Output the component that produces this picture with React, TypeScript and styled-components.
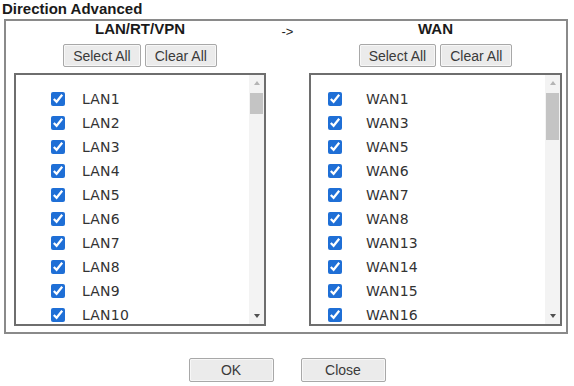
import styled, { createGlobalStyle } from "styled-components";

const GlobalStyle = createGlobalStyle`
  html, body {
    margin: 0;
    padding: 0;
    background: #fff;
  }
  body {
    font-family: "Liberation Sans", Arial, sans-serif;
    color: #222;
  }
`;

/* Page */
const Page = styled.div`
  width: 574px;
  height: 386px;
  padding: 0 6px 0 4px;
  box-sizing: border-box;
  overflow: hidden;
`;

const Title = styled.div`
  font-weight: 700;
  font-size: 15px;
  line-height: 17px;
  height: 19px;
  margin-left: -2px;
  color: #1a1a1a;
`;

const Panel = styled.div`
  display: grid;
  grid-template-columns: 252px 43px 253px;
  padding: 0 4px 6px 8px;
  border: 2px solid #8a8a8a;
  background: #fff;
`;

const Column = styled.div`
  display: flex;
  flex-direction: column;
  align-items: center;
`;

const ColumnTitle = styled.div`
  font-weight: 700;
  font-size: 15px;
  line-height: 16px;
  height: 16px;
  color: #1a1a1a;
`;

const Arrow = styled.div`
  margin-top: 3px;
  font-size: 13px;
  line-height: 16px;
  text-align: center;
  color: #222;
`;

const ButtonRow = styled.div`
  display: flex;
  gap: 4px;
  margin-top: 7px;
`;

type BtnProps = { $width?: number };

const Button = styled.button<BtnProps>`
  height: ${({ $width }) => ($width ? "24px" : "23px")};
  width: ${({ $width }) => ($width ? `${$width}px` : "auto")};
  padding: 0 9px;
  font-family: "Liberation Sans", Arial, sans-serif;
  font-size: 14px;
  color: #3a3a3a;
  background: #ebebeb;
  border: 1px solid #a8a8a8;
  border-radius: 2px;
  box-shadow: inset 0 0 0 1px #f7f7f7;
  cursor: pointer;
`;

const ListBox = styled.div`
  display: flex;
  width: 100%;
  height: 253px;
  margin-top: 6px;
  box-sizing: border-box;
  border: 2px solid #6e6e6e;
  background: #fff;
`;

const Items = styled.div`
  flex: 1;
  overflow: hidden;
  padding-top: 12px;
`;

type RowProps = { $indent: number };

const Row = styled.label<RowProps>`
  display: flex;
  align-items: center;
  height: 24px;
  padding-left: ${({ $indent }) => $indent}px;
`;

const Check = styled.input.attrs({ type: "checkbox" })`
  width: 14px;
  height: 14px;
  margin: 0;
  accent-color: #1f6fd6;
`;

type LabelProps = { $gap: number };

const ItemLabel = styled.span<LabelProps>`
  margin-left: ${({ $gap }) => $gap}px;
  font-family: "DejaVu Sans", Verdana, sans-serif;
  font-size: 14px;
  color: #333;
  letter-spacing: 0.2px;
`;

/* Fake classic scrollbar */
const Scrollbar = styled.div`
  display: flex;
  flex-direction: column;
  width: 15px;
  background: #f3f3f3;
`;

const ScrollButton = styled.div`
  display: flex;
  align-items: center;
  justify-content: center;
  height: 16px;
`;

type TriProps = { $up?: boolean };

const Triangle = styled.div<TriProps>`
  width: 0;
  height: 0;
  border-left: 3.5px solid transparent;
  border-right: 3.5px solid transparent;
  ${({ $up }) =>
    $up
      ? "border-bottom: 4px solid #b4b4b4;"
      : "border-top: 4px solid #505050;"}
`;

const Track = styled.div`
  flex: 1;
  padding: 2px 1px;
`;

const Thumb = styled.div`
  background: #c4c4c4;
`;

const Footer = styled.div`
  display: flex;
  justify-content: center;
  gap: 27px;
  margin-top: 24px;
  margin-left: -4px;
  margin-right: -6px;
`;

const lanItems = Array.from({ length: 10 }, (_, i) => `LAN${i + 1}`);
const wanItems = [1, 3, 5, 6, 7, 8, 13, 14, 15, 16].map((n) => `WAN${n}`);

type ListProps = {
  items: string[];
  indent: number;
  gap: number;
  thumb: number;
};

const CheckList = ({ items, indent, gap, thumb }: ListProps) => (
  <ListBox>
    <Items>
      {items.map((item) => (
        <Row key={item} $indent={indent}>
          <Check defaultChecked />
          <ItemLabel $gap={gap}>{item}</ItemLabel>
        </Row>
      ))}
    </Items>
    <Scrollbar>
      <ScrollButton>
        <Triangle $up />
      </ScrollButton>
      <Track>
        <Thumb style={{ height: thumb }} />
      </Track>
      <ScrollButton>
        <Triangle />
      </ScrollButton>
    </Scrollbar>
  </ListBox>
);

export default function App() {
  return (
    <>
      <GlobalStyle />
      <Page>
        <Title>Direction Advanced</Title>
        <Panel>
          <Column>
            <ColumnTitle>LAN/RT/VPN</ColumnTitle>
            <ButtonRow>
              <Button>Select All</Button>
              <Button>Clear All</Button>
            </ButtonRow>
            <CheckList items={lanItems} indent={35} gap={17} thumb={21} />
          </Column>
          <Arrow>-&gt;</Arrow>
          <Column>
            <ColumnTitle>WAN</ColumnTitle>
            <ButtonRow>
              <Button>Select All</Button>
              <Button>Clear All</Button>
            </ButtonRow>
            <CheckList items={wanItems} indent={17} gap={24} thumb={47} />
          </Column>
        </Panel>
        <Footer>
          <Button $width={85}>OK</Button>
          <Button $width={85}>Close</Button>
        </Footer>
      </Page>
    </>
  );
}
